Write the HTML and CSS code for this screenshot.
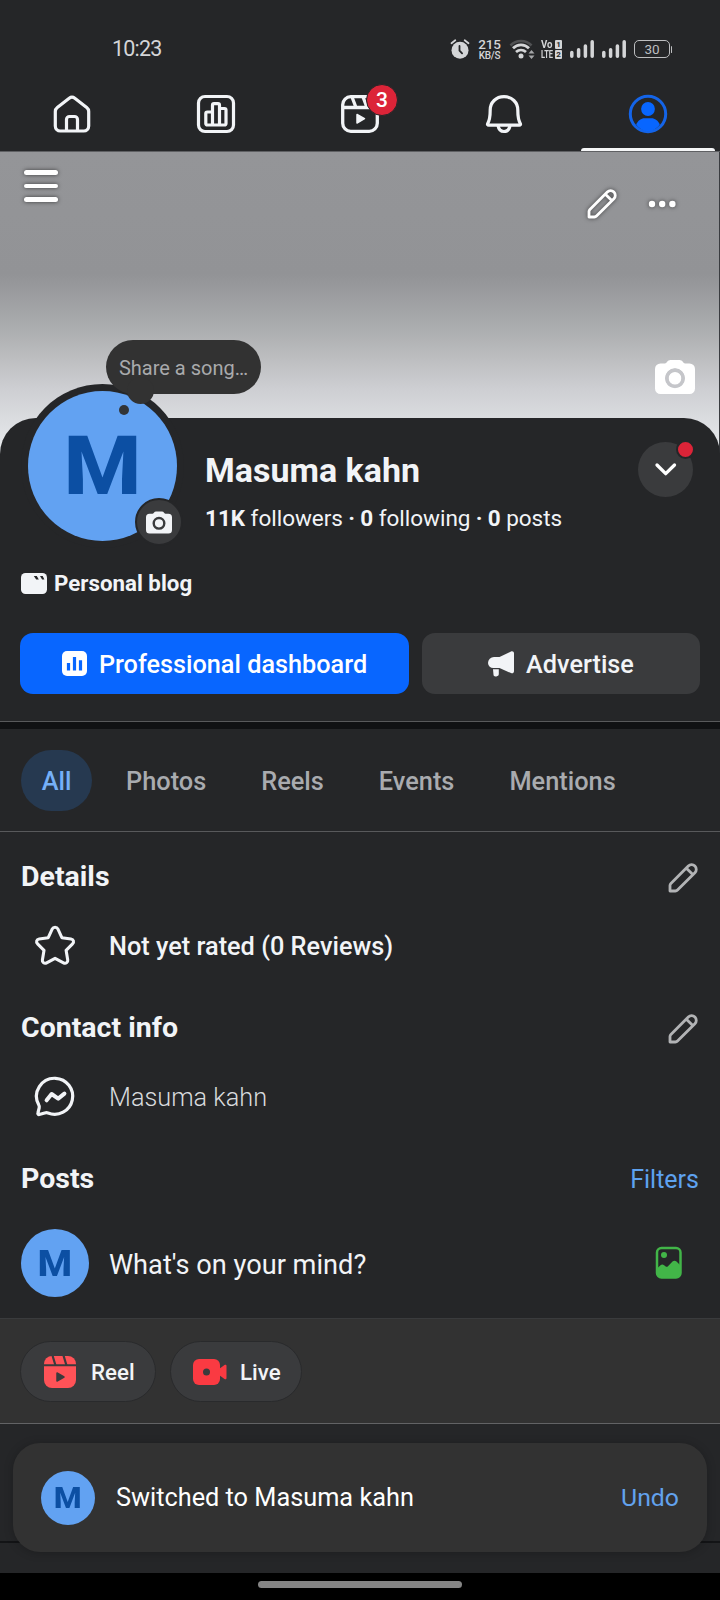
FILE: index.html
```html
<!DOCTYPE html>
<html lang="en">
<head>
<meta charset="utf-8">
<title>Masuma kahn</title>
<link rel="stylesheet" href="styles.css">
</head>
<body>
<svg class="defs" width="0" height="0" aria-hidden="true">
  <symbol id="pencil" viewBox="0 0 32 32">
    <path d="M3 29v-5.4a3 3 0 0 1 .9-2.1L21.3 4.1a4.2 4.2 0 0 1 6.6 6.6L10.5 28.1a3 3 0 0 1-2.1.9H3zM19.4 6.2l6.4 6.4" fill="none" stroke="currentColor" stroke-width="2.8" stroke-linejoin="round"/>
  </symbol>
  <symbol id="camera" viewBox="0 0 40 34">
    <path fill-rule="evenodd" fill="currentColor" d="M5.500 3.500H10c1.500 0 2.500-3.500 5.500-3.500h9c3 0 4 3.500 5.500 3.500h4.500A5.500 5.500 0 0 1 40 9v19.500a5.500 5.500 0 0 1-5.500 5.500h-29A5.500 5.500 0 0 1 0 28.500V9A5.500 5.500 0 0 1 5.500 3.500zM20 8.300a10 10 0 1 0 0 20 10 10 0 0 0 0-20zm0 3.700a6.300 6.300 0 1 1 0 12.600 6.300 6.300 0 0 1 0-12.600z"/>
  </symbol>
  <symbol id="signal" viewBox="0 0 24 18">
    <path d="M1.800 12.400v3.800M8.600 9.800v6.400M15.400 6v10.200M22.200 1.800v14.400" fill="none" stroke="currentColor" stroke-width="3.500" stroke-linecap="round"/>
  </symbol>
</svg>

<div class="phone">
  <header class="top">
    <div class="status">
      <span class="time">10:23</span>
      <div class="status-icons">
        <svg class="alarm" viewBox="0 0 20 20" width="20" height="20">
          <circle cx="10" cy="11.200" r="8.500" fill="#d4d5d7"/>
          <path d="M1.500 4.200 5.300 1.200M18.500 4.200 14.700 1.200" stroke="#d4d5d7" stroke-width="1.800" stroke-linecap="round"/>
          <path d="M9.500 7v4.600l2.600 2.800" fill="none" stroke="#252628" stroke-width="1.800" stroke-linecap="round"/>
        </svg>
        <div class="speed"><b>215</b><span>KB/S</span></div>
        <svg class="wifi" viewBox="0 0 25 21" width="25" height="21">
          <path d="M1.500 6.500C7 .5 17 .5 22.500 6.500" fill="none" stroke="#505153" stroke-width="2.600"/>
          <path d="M4 9.300C8.500 4.800 15.500 4.800 20 9.300M7 13c3-2.600 7-2.600 10 0" fill="none" stroke="#d4d5d7" stroke-width="2.800"/>
          <circle cx="12" cy="17" r="2.500" fill="#d4d5d7"/>
          <path d="M19.500 14.500h6L22.500 11zM19.500 16.500h6L22.500 20z" fill="#a5a6a8"/>
        </svg>
        <div class="volte">
          <span>Vo</span><i>1</i>
          <span>LTE</span><i>2</i>
        </div>
        <svg class="sig one" width="24" height="18"><use href="#signal"/></svg>
        <svg class="sig two" width="24" height="18"><use href="#signal"/></svg>
        <div class="battery">30</div>
      </div>
    </div>
    <nav class="nav">
      <a><svg viewBox="0 0 40 40" width="40" height="40" fill="none" stroke="#f2f4f7" stroke-width="3.200" stroke-linejoin="round">
        <path d="M3.300 17.500a5 5 0 0 1 2-4L17.200 4.300a4.600 4.600 0 0 1 5.600 0l11.900 9.200a5 5 0 0 1 2 4V32a5 5 0 0 1-5 5H8.300a5 5 0 0 1-5-5z"/>
        <path d="M14.500 37V25.500a3 3 0 0 1 3-3h5a3 3 0 0 1 3 3V37"/></svg></a>
      <a><svg viewBox="0 0 40 40" width="40" height="40" fill="none" stroke="#f2f4f7" stroke-width="3.200" stroke-linejoin="round">
        <rect x="2.500" y="2.500" width="35" height="35" rx="6.500"/>
        <path d="M15 31H11.300a1.500 1.500 0 0 1-1.500-1.500V19.500A1.500 1.500 0 0 1 11.300 18H16.500V11.200A1.500 1.500 0 0 1 18 9.700h4a1.500 1.500 0 0 1 1.500 1.500V14.500h5a1.500 1.500 0 0 1 1.500 1.500v13.500a1.500 1.500 0 0 1-1.500 1.500H15zM16.500 18v13M23.500 14.500V31"/></svg></a>
      <a><svg viewBox="0 0 40 40" width="40" height="40" fill="none" stroke="#f2f4f7" stroke-width="3.300" stroke-linejoin="round">
        <rect x="2.700" y="2.700" width="34.600" height="34.600" rx="8"/>
        <path d="M3 13.500h34M12 3l4 10.500M23 3l4 10.500"/>
        <path d="M17 20.500v8.500l7.500-4.300z" fill="#f2f4f7" stroke-width="1.500"/></svg>
        <span class="count">3</span></a>
      <a><svg viewBox="0 0 40 40" width="40" height="40" fill="none" stroke="#f2f4f7" stroke-width="3.200" stroke-linejoin="round">
        <path d="M20 2.700c8 0 13.800 5.700 13.800 13.400 0 6 .6 10.400 2.500 13.400.5.900 0 1.700-1 1.700H4.700c-1 0-1.500-.8-1-1.700 1.900-3 2.500-7.400 2.500-13.400C6.200 8.400 12 2.700 20 2.700z"/>
        <path d="M14 31.500c.6 3.800 2.800 6 6 6s5.400-2.200 6-6"/></svg></a>
      <a class="active"><svg viewBox="0 0 40 40" width="40" height="40">
        <circle cx="20" cy="20" r="17.700" fill="none" stroke="#1464e8" stroke-width="3"/>
        <circle cx="20" cy="15" r="6.900" fill="#0866ff"/>
        <path d="M8.200 30.500c1.500-4 5-6.300 8.300-6.300h7c3.300 0 6.800 2.300 8.300 6.300C28.900 34.500 25 37 20 37S11.100 34.500 8.200 30.500z" fill="#0866ff"/></svg></a>
    </nav>
  </header>

  <section class="cover">
    <div class="menu"><i></i><i></i><i></i></div>
    <div class="cover-tools">
      <svg class="shadow" width="32" height="32"><use href="#pencil"/></svg>
      <svg class="shadow" width="30" height="32" viewBox="0 0 30 32" fill="#fff"><circle cx="5" cy="16" r="3.200"/><circle cx="15.200" cy="16" r="3.200"/><circle cx="25.400" cy="16" r="3.200"/></svg>
    </div>
    <svg class="cover-camera" width="40" height="34"><use href="#camera"/><circle cx="20" cy="18.300" r="8.200" fill="none" stroke="#c5c6ca" stroke-width="3"/></svg>
  </section>

  <section class="profile">
    <div class="identity">
      <div class="avatar big"><span>M</span>
        <div class="song">Share a song…</div>
        <i class="song-dot"></i>
        <div class="badge"><svg width="26" height="23"><use href="#camera"/></svg></div>
      </div>
      <div class="who">
        <h1>Masuma kahn</h1>
        <p class="stats"><b>11K</b> followers <b class="sep">·</b> <b>0</b> following <b class="sep">·</b> <b>0</b> posts</p>
      </div>
      <div class="switch">
        <svg width="24" height="15" viewBox="0 0 24 15"><path d="M3 3l8.700 8.700L20.500 3" fill="none" stroke="#fff" stroke-width="3.300" stroke-linecap="round" stroke-linejoin="round"/></svg>
        <i></i>
      </div>
    </div>
    <div class="category">
      <svg width="26" height="21" viewBox="0 0 26 21"><rect width="26" height="21" rx="4.500" fill="#f2f4f7"/><path d="M12.800 3h3l2 3.400h-2.600zM19 3h2.700l1.700 3.400h-2.300z" fill="#252628"/></svg>
      <b>Personal blog</b>
    </div>
    <div class="actions">
      <button class="primary"><svg width="25" height="25" viewBox="0 0 25 25"><rect width="25" height="25" rx="5" fill="#fff"/><path d="M6.500 12v7.500M12.500 6v13.500M18.500 9.200v10.300" stroke="#0866ff" stroke-width="3.200"/></svg><span>Professional dashboard</span></button>
      <button><svg width="26" height="26" viewBox="0 0 26 26" fill="#f2f4f7"><path d="M0 12a6 6 0 0 1 6-6h5.500L23 .5C24.500-.2 26 .7 26 2.300v18c0 1.600-1.500 2.500-3 1.800L11.500 17H5.500A5.200 5.200 0 0 1 0 12zM5 18.300h5.800v4.800c0 1.300-1 2.300-2.400 2.300h-.9c-1.200 0-1.900-.7-2-1.700z"/></svg><span>Advertise</span></button>
    </div>
  </section>

  <nav class="tabs"><a class="on">All</a><a>Photos</a><a>Reels</a><a>Events</a><a>Mentions</a></nav>

  <section class="info">
    <div class="heading"><h2>Details</h2><svg width="32" height="32"><use href="#pencil"/></svg></div>
    <div class="row medium">
      <svg width="42" height="42" viewBox="0 0 42 42"><path d="M18.100 4.200c1.100-2.300 4.700-2.300 5.800 0l4.200 9.200 9.500 1.300c2.700.4 3.500 3.400 1.600 5.200l-6.700 6.700 1.700 10c.4 2.700-2.200 4.300-4.400 3L21 34.900l-8.800 4.700c-2.200 1.300-4.800-.3-4.400-3l1.700-10-6.700-6.700c-1.900-1.800-1.100-4.800 1.600-5.200l9.500-1.300z" transform="translate(.9 -.2) scale(.96)" fill="none" stroke="#f2f4f7" stroke-width="3.200" stroke-linejoin="round"/></svg>
      <span>Not yet rated (0 Reviews)</span>
    </div>
    <div class="heading second"><h2>Contact info</h2><svg width="32" height="32"><use href="#pencil"/></svg></div>
    <div class="row light">
      <svg width="42" height="42" viewBox="0 0 42 42"><path d="M21.500 2.300a18 18 0 1 1-7.500 34.700c-1.500-.6-2.300-.3-3.300 0L5.300 38.500c-1 .2-1.700-.5-1.400-1.500l1.300-5.200c.3-1.200.1-2-.5-3A18 18 0 0 1 21.500 2.300z" fill="none" stroke="#f2f4f7" stroke-width="3.200"/><path d="M12.600 24.300l5-6.300 6.600 4.600 6.200-5" fill="none" stroke="#f2f4f7" stroke-width="4" stroke-linejoin="round" stroke-linecap="round"/></svg>
      <span>Masuma kahn</span>
    </div>
    <div class="heading third"><h2>Posts</h2><a>Filters</a></div>
    <div class="composer">
      <div class="avatar mid"><span>M</span></div>
      <span class="prompt">What's on your mind?</span>
      <svg width="28" height="34" viewBox="0 0 28 34"><rect x="2" y="2" width="23.500" height="29.500" rx="4.500" fill="none" stroke="#42b548" stroke-width="2.500"/><circle cx="9" cy="9" r="3" fill="#42b548"/><path d="M2 22.500l3.500-3.200c1.200-1 2.300-1 3.600 0l1.300 1c1 .8 1.800.7 2.800-.4l4.300-4.300c1.200-1.200 2.800-1.200 4 0l4 4V27.500a4 4 0 0 1-4 4H6a4 4 0 0 1-4-4z" fill="#42b548"/></svg>
    </div>
  </section>

  <section class="chips">
    <a><svg width="32" height="32" viewBox="0 0 32 32"><defs><clipPath id="reelclip"><rect width="32" height="32" rx="8"/></clipPath></defs><g clip-path="url(#reelclip)"><path d="M0 0h32v8.200H0zM0 10.300h32V32H0z" fill="#ff5257"/><path d="M8.500-.5l3 10M19.500-.5l3 10" stroke="#3a3b3d" stroke-width="2.200"/></g><path d="M13 17v8l7-4z" fill="#3a3b3d" stroke="#3a3b3d" stroke-width="1.500" stroke-linejoin="round"/></svg>Reel</a>
    <a class="live"><svg width="34" height="26" viewBox="0 0 34 26"><rect width="27" height="26" rx="6" fill="#fa3a42"/><path d="M26 10l5.500-4c1-.7 2 0 2 1v12c0 1-1 1.700-2 1L26 16z" fill="#fa3a42"/><circle cx="13.500" cy="13" r="3.500" fill="#3a3b3d"/></svg>Live</a>
  </section>

  <section class="bottom">
    <div class="toast">
      <div class="avatar small"><span>M</span></div>
      <span class="msg">Switched to Masuma kahn</span>
      <a>Undo</a>
    </div>
  </section>
  <footer class="gesture"><i></i></footer>
</div>
</body>
</html>
```

FILE: styles.css
```css
* { box-sizing: border-box; }
body, h1, h2, p { margin: 0; }
body {
  width: 720px;
  background: #252628;
  color: #f2f4f7;
  font-family: Roboto, "Liberation Sans", sans-serif;
}
svg { display: block; flex: none; overflow: visible; }
.defs { position: absolute; }
.phone { width: 720px; height: 1600px; overflow: hidden; display: flex; flex-direction: column; }
.phone > * { flex: none; }

/* status bar and main navigation */
.top { height: 152px; border-bottom: 1px solid #5f6063; }
.status { height: 77px; padding: 33px 50px 0 112px; display: flex; justify-content: space-between; align-items: flex-start; color: #d4d5d7; }
.time { font-size: 21.500px; line-height: 32px; letter-spacing: -.8px; }
.status-icons { display: flex; align-items: center; height: 32px; }
.speed { margin-left: 8px; width: 23px; height: 24px; padding-top: 1px; display: grid; grid-template-rows: 12px 11px; justify-items: center; }
.speed b { font-size: 13.500px; line-height: 12px; letter-spacing: -.2px; font-weight: 500; }
.speed span { font-size: 10px; line-height: 12px; font-weight: 500; letter-spacing: -.3px; }
.wifi { margin-left: 8px; }
.volte { margin-left: 7px; width: 22px; display: grid; grid-template-columns: 14px 7px; row-gap: 1px; font-size: 11px; line-height: 9px; font-weight: 700; }
.volte span { transform: scaleX(.68); transform-origin: left; }
.volte span:first-child { transform: scaleX(.88); }
.volte i { font-style: normal; font-size: 8px; background: #d4d5d7; color: #252628; text-align: center; border-radius: 1px; }
.sig.one { margin-left: 7px; }
.sig.two { margin-left: 8px; }
.battery { position: relative; margin-left: 8px; width: 36px; height: 18px; border: 1.500px solid #bdbec0; border-radius: 5px; font-size: 13.500px; line-height: 16px; text-align: center; color: #bdbec0; }
.battery::after { content: ""; position: absolute; left: 35.500px; top: 4.500px; width: 1.500px; height: 7px; background: #bdbec0; border-radius: 1px; }
.nav { height: 74px; display: grid; grid-template-columns: repeat(5, 144px); }
.nav a { position: relative; display: flex; align-items: center; justify-content: center; }
.active::after { content: ""; position: absolute; left: 5px; bottom: 0; width: 134px; height: 3px; background: #f5f6f7; border-radius: 3px 3px 0 0; }
.count { position: absolute; left: 78px; top: 7px; width: 32px; height: 32px; border: 1px solid #252628; border-radius: 50%; background: #dc2438; color: #fff; font-size: 21px; line-height: 31px; text-align: center; font-weight: 500; }

/* cover */
.cover {
  position: relative;
  height: 308px;
  padding: 18px 42px 0 24px;
  display: flex;
  justify-content: space-between;
  background: linear-gradient(#949598 0, #929396 122px, #9d9ea1 146px, #acaeb0 178px, #bcbdbf 205px, #cdced2 236px, #dadcdf 266px, #eceef1 308px);
  border-right: 1px solid #3a3c40;
}
.menu { display: grid; grid-auto-rows: 4.500px; row-gap: 9px; width: 34px; }
.menu i { background: #fff; border-radius: 3px; box-shadow: 0 0 4px rgba(0,0,0,.6); }
.cover-tools { display: flex; gap: 29px; padding-top: 18px; color: #fff; }
.shadow { filter: drop-shadow(0 0 2px rgba(0,0,0,.6)); }
.cover-camera { position: absolute; left: 655px; top: 208px; color: #fff; }

/* profile panel */
.profile { position: relative; height: 304px; margin-top: -42px; background: #252628; border-radius: 36px 36px 0 0; border-bottom: 1px solid #58595b; }
.identity { display: flex; height: 144px; padding-left: 28px; }
.avatar { border-radius: 50%; background: #62a2f2; color: #0c4fa3; font-weight: 800; display: flex; align-items: center; justify-content: center; flex: none; }
.avatar > span { transform: scaleX(1.1); }
.big { position: relative; width: 149px; height: 150px; margin-top: -27px; box-shadow: 0 0 0 7px #252628; font-size: 81px; }
.song { position: absolute; z-index: 1; isolation: isolate; left: 78px; top: -51px; width: 155px; height: 54px; border-radius: 27px; background: #323232; color: #a9aaac; font-size: 20px; font-weight: 400; line-height: 56px; text-align: center; white-space: nowrap; }
.song::after { content: ""; position: absolute; left: 21px; top: 37px; width: 27px; height: 27px; border-radius: 50%; background: #323232; z-index: -1; }
.song-dot { position: absolute; left: 91px; top: 14px; width: 10px; height: 10px; border-radius: 50%; background: #323436; }
.badge { position: absolute; left: 107px; top: 107px; width: 48px; height: 48px; border: 2.500px solid #252628; border-radius: 50%; background: #3a3b3d; color: #f2f4f7; display: flex; align-items: center; justify-content: center; }
.who { margin-left: 28px; padding-top: 32px; white-space: nowrap; }
h1 { font-size: 34px; line-height: 40px; font-weight: 700; }
.stats { font-size: 22.500px; line-height: 30px; margin-top: 13px; letter-spacing: -.02px; }
.sep { margin: 0 -.3px; }
.switch { position: relative; margin: 24px 27px 0 auto; width: 55px; height: 55px; border-radius: 50%; background: #3a3b3d; display: flex; align-items: center; justify-content: center; }
.switch i { position: absolute; right: -2px; top: -2px; width: 19px; height: 19px; border: 2px solid #252628; border-radius: 50%; background: #dc2438; }
.category { display: flex; align-items: center; gap: 7px; height: 42px; padding-left: 21px; font-size: 22.300px; }
.actions { display: grid; grid-template-columns: 389px 278px; gap: 13px; padding: 29px 20px 0; }
button { height: 61px; border: 0; padding: 0; border-radius: 13px; background: #3a3b3d; color: #f2f4f7; font: 500 25.250px Roboto, sans-serif; display: flex; align-items: center; justify-content: center; gap: 12px; }
button span { padding-top: 1px; }
.primary { background: #0866ff; color: #fff; }

/* tabs */
.tabs { height: 110px; padding: 21px 21px 0; border-top: 7px solid #101113; border-bottom: 1px solid #58595b; display: flex; align-items: flex-start; }
.tabs a { height: 61px; line-height: 63px; font-size: 25.350px; font-weight: 500; color: #a9abaf; margin-left: 55px; }
.tabs a.on { width: 71px; border-radius: 31px; background: #263950; color: #75b0f8; text-align: center; margin: 0; }
.tabs a.on + a { margin-left: 34px; }

/* details, contact, posts */
.info { height: 486px; padding: 0 21px; }
.heading { display: flex; justify-content: space-between; align-items: center; height: 40px; margin-top: 25px; color: #b2b3b5; }
.heading svg { margin: 2px 0 0; }
h2 { font-size: 28.500px; line-height: 42px; font-weight: 700; color: #f2f4f7; }
.heading a { font-size: 25px; color: #5ea2f0; padding-top: 1px; }
.row { display: flex; align-items: center; height: 42px; margin-top: 28px; padding-left: 13px; gap: 33px; font-size: 25.300px; }
.row svg { margin-top: -1px; }
.medium { font-weight: 500; }
.light { font-weight: 300; color: #d8dadd; }
.second, .third { margin-top: 41px; }
.composer { height: 68px; margin-top: 30px; display: flex; align-items: center; }
.composer > svg { margin: 0 16px 0 auto; }
.mid { width: 68px; height: 68px; font-size: 36px; }
.mid span { padding-top: 1px; }
.prompt { margin-left: 20px; font-size: 27.200px; padding-top: 3px; }

.chips { height: 106px; padding: 22px 20px 0; background: #323232; border-top: 1px solid #3a3b3d; border-bottom: 1px solid #626365; display: flex; gap: 14px; }
.chips a { width: 136px; height: 61px; border: 1.500px solid #292a2c; border-radius: 31px; background: #3a3b3d; display: flex; align-items: center; gap: 15px; padding-left: 23px; font-size: 22.300px; font-weight: 500; }
.chips .live { width: 132px; padding-left: 22px; gap: 13px; }

/* toast and gesture bar */
.bottom { height: 149px; padding: 19px 13px 0; background: linear-gradient(#131416, #131416) 0 117px / 100% 2px no-repeat #252628; }
.toast { height: 109px; padding: 0 28px; border-radius: 27px; background: #323232; box-shadow: 0 1px 10px rgba(0,0,0,.22); display: flex; align-items: center; font-size: 25.300px; color: #fff; }
.small { width: 54px; height: 54px; font-size: 29px; }
.msg { margin-left: 21px; }
.toast a { margin-left: auto; color: #62a2ee; font-size: 24.800px; }
.gesture { height: 28px; background: #000; display: flex; justify-content: center; padding-top: 8px; }
.gesture i { width: 204px; height: 7px; border-radius: 4px; background: #858585; }
```
